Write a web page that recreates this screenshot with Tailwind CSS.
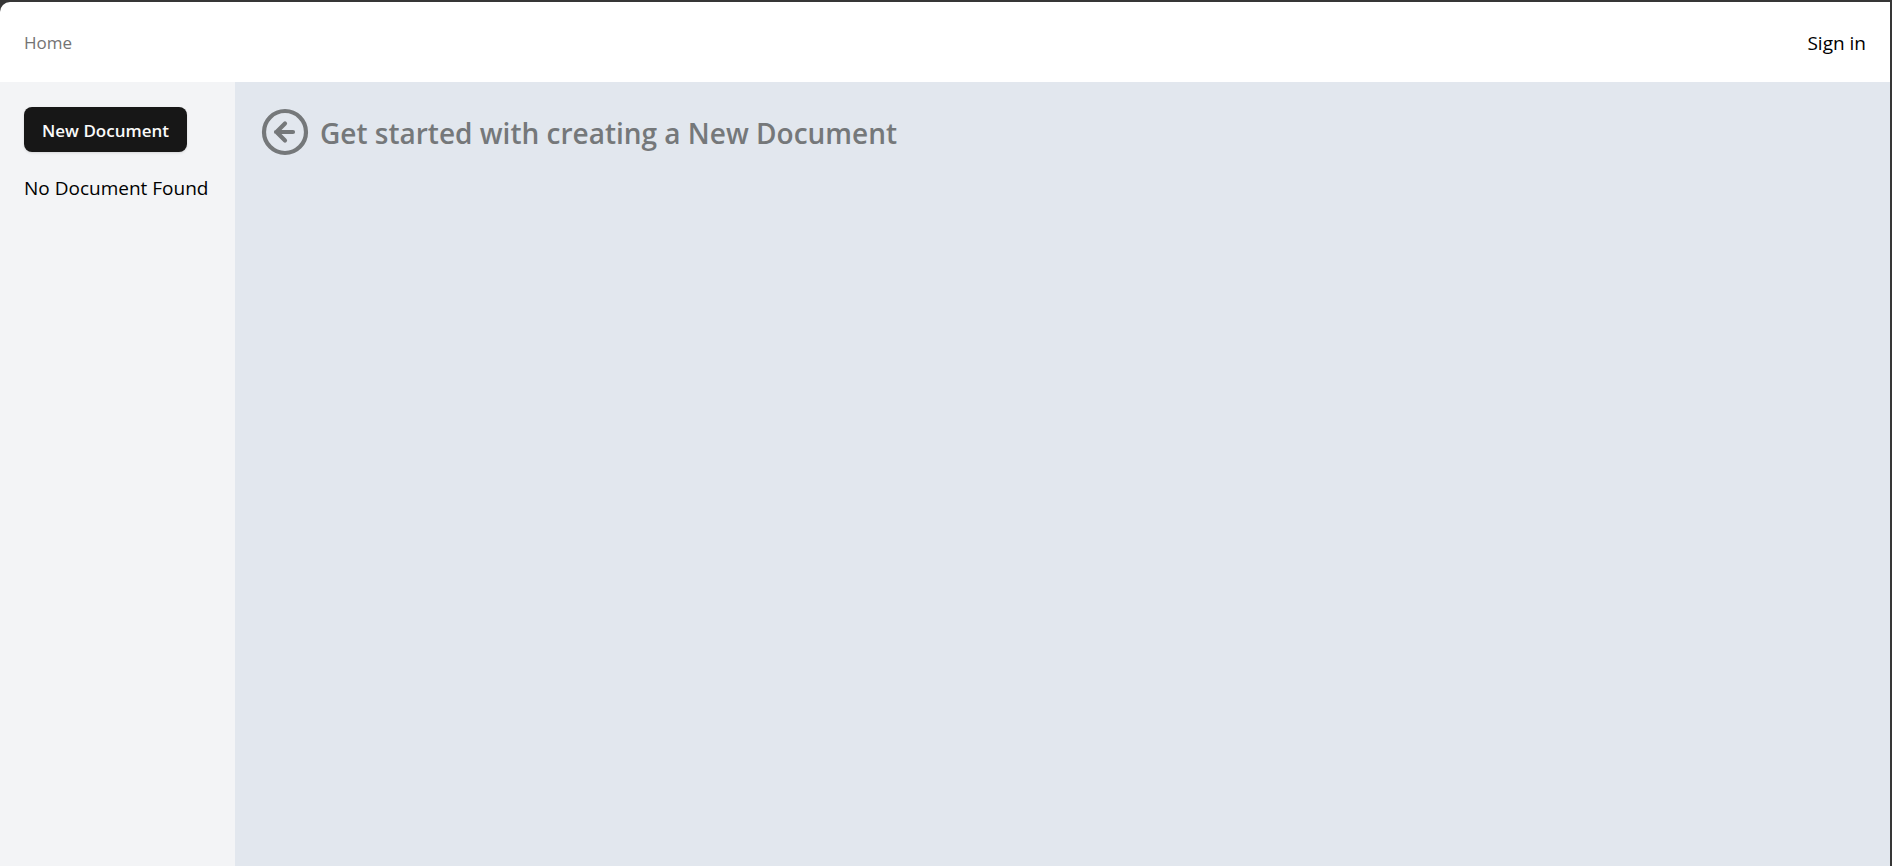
<!DOCTYPE html>
<html lang="en">
<head>
<meta charset="utf-8">
<title>Documents</title>
<script src="https://cdn.jsdelivr.net/npm/@tailwindcss/browser@4"></script>
</head>
<body class="min-h-screen bg-[#363636] pt-[2px] pr-[2px] font-['Segoe_UI','Open_Sans',sans-serif] text-black">
<div class="flex min-h-[calc(100vh-2px)] flex-col overflow-hidden rounded-tl-[10px] bg-white">
  <header class="flex h-20 items-center justify-between px-6 pt-[2px]">
    <nav><a href="#" class="text-[17px] text-[#737373]">Home</a></nav>
    <button type="button" class="text-[19px]">Sign in</button>
  </header>
  <div class="flex flex-1">
    <aside class="flex w-[235px] shrink-0 flex-col items-start bg-[#f3f4f6] px-6 py-[25px]">
      <button type="button" class="h-[45px] rounded-lg bg-[#171717] px-[18px] pt-[2px] text-[17px] font-semibold text-[#fafafa] shadow-sm">New Document</button>
      <p class="mt-5 text-[19px] leading-8">No Document Found</p>
    </aside>
    <main class="flex-1 bg-[#e2e7ee] px-[25px] py-[25px]">
      <h1 class="flex items-center gap-[10px] text-[28px] leading-[48px] font-semibold text-[#75787a]">
        <svg class="size-[50px]" viewBox="0 0 50 50" fill="none" stroke="currentColor" stroke-width="4.200" stroke-linecap="round" stroke-linejoin="round" aria-hidden="true"><circle cx="25" cy="25" r="21"/><path d="M33 25H16M25 16.500l-8.500 8.500 8.500 8.500"/></svg>
        <span class="pt-[2px]">Get started with creating a New Document</span>
      </h1>
    </main>
  </div>
</div>
</body>
</html>
